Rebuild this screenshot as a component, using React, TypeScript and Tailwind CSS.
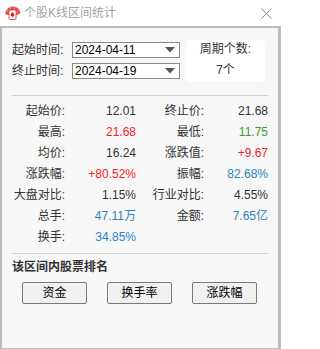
const font = { fontFamily: '"Liberation Sans", "Noto Sans CJK SC", sans-serif' };

type Cell = { text: string; color?: string };
type Row = [string, Cell, string?, Cell?];

const RED = 'text-[#f5222d]';
const GREEN = 'text-[#3c9a2c]';
const BLUE = 'text-[#2b84c2]';

const rows: Row[] = [
  ['起始价:', { text: '12.01' }, '终止价:', { text: '21.68' }],
  ['最高:', { text: '21.68', color: RED }, '最低:', { text: '11.75', color: GREEN }],
  ['均价:', { text: '16.24' }, '涨跌值:', { text: '+9.67', color: RED }],
  ['涨跌幅:', { text: '+80.52%', color: RED }, '振幅:', { text: '82.68%', color: BLUE }],
  ['大盘对比:', { text: '1.15%' }, '行业对比:', { text: '4.55%' }],
  ['总手:', { text: '47.11万', color: BLUE }, '金额:', { text: '7.65亿', color: BLUE }],
  ['换手:', { text: '34.85%', color: BLUE }],
];

function CardsIcon() {
  return (
    <svg width="17" height="14" viewBox="0 0 17 14">
      <path d="M1 8 L3 3 L6 1 L9 0.5 L12 1 L15 3 L16.5 7 L13 9 L4 9 Z" fill="#e04848" />
      <path d="M3 3 L5.5 8 M6 1 L7.5 8 M11 1 L9.5 8 M14.5 3 L12 8" stroke="#f7b0b0" strokeWidth="0.8" />
      <rect x="5" y="4" width="7" height="9.5" rx="0.8" fill="#fff" stroke="#c83030" strokeWidth="0.8" />
      <path d="M8.5 6 C7.2 7.6 6.4 8.4 6.8 9.6 C7.2 10.6 8.2 10.3 8.5 9.8 C8.8 10.3 9.8 10.6 10.2 9.6 C10.6 8.4 9.8 7.6 8.5 6 Z M8.5 9.5 L7.8 11.6 L9.2 11.6 Z" fill="#e01818" />
    </svg>
  );
}

function DateSelect({ value }: { value: string }) {
  return (
    <div className="flex h-[16px] w-[108px] items-center justify-between border border-[#8a8a8a] bg-white pl-[2px] pr-[4px] text-[12px] leading-[14px] text-black">
      <span>{value}</span>
      <svg width="10" height="6" viewBox="0 0 10 6">
        <path d="M0 0 H10 L5 5.5 Z" fill="#555" />
      </svg>
    </div>
  );
}

export default function App() {
  return (
    <div className="flex h-[349px] w-[281px] flex-col bg-white text-[12px] text-[#333]" style={font}>
      <div className="flex h-[26px] items-center bg-white pl-[4px] pr-[9px]">
        <CardsIcon />
        <span className="ml-[3px] text-[12px] text-[#a3a3a3]">个股K线区间统计</span>
        <svg className="ml-auto" width="11" height="11" viewBox="0 0 11 11">
          <path d="M0.5 0.5 L10.5 10.5 M10.5 0.5 L0.5 10.5" stroke="#8c8c8c" strokeWidth="1" />
        </svg>
      </div>

      <div className="flex flex-1 flex-col border-b border-l-2 border-r-[3px] border-t-2 border-[#bdbdbd] bg-[#f7f7f7] pl-[10px] pr-[10px]">
        <div className="flex items-start pt-[12px]">
          <div className="mt-[2px] flex flex-col gap-[5px]">
            <div className="flex h-[16px] items-center">
              <span className="w-[60px] leading-[16px]">起始时间:</span>
              <DateSelect value="2024-04-11" />
            </div>
            <div className="flex h-[16px] items-center">
              <span className="w-[60px] leading-[16px]">终止时间:</span>
              <DateSelect value="2024-04-19" />
            </div>
          </div>
          <div className="ml-[6px] flex h-[42px] w-[79px] flex-col items-center rounded-[3px] bg-white pt-[1px] leading-[16px] text-[#333]">
            <span>周期个数:</span>
            <span className="mt-[5px]">7个</span>
          </div>
        </div>

        <div className="mt-[13px] h-px bg-[#d2d2d2]" />

        <div className="mt-[5px] grid grid-cols-[53px_71px_68px_64px] text-right leading-[21px]">
          {rows.map(([l1, v1, l2, v2]) => (
            <div className="contents" key={l1}>
              <span className="h-[21px]">{l1}</span>
              <span className={`h-[21px] ${v1.color ?? 'text-[#333]'}`}>{v1.text}</span>
              <span className="h-[21px]">{l2 ?? ''}</span>
              <span className={`h-[21px] ${v2?.color ?? 'text-[#333]'}`}>{v2?.text ?? ''}</span>
            </div>
          ))}
        </div>

        <div className="mt-[5px] h-px bg-[#d2d2d2]" />

        <div className="mt-[4px] text-[12px] font-bold leading-[18px] text-[#333]">该区间内股票排名</div>

        <div className="ml-[10px] mt-[6px] flex gap-[20px]">
          {['资金', '换手率', '涨跌幅'].map((b) => (
            <button
              className="flex h-[22px] w-[65px] items-center justify-center rounded-[2px] border border-[#7a7a7a] bg-[#f0f0f0] text-[12px] text-black"
              key={b}
            >
              {b}
            </button>
          ))}
        </div>
      </div>
    </div>
  );
}
